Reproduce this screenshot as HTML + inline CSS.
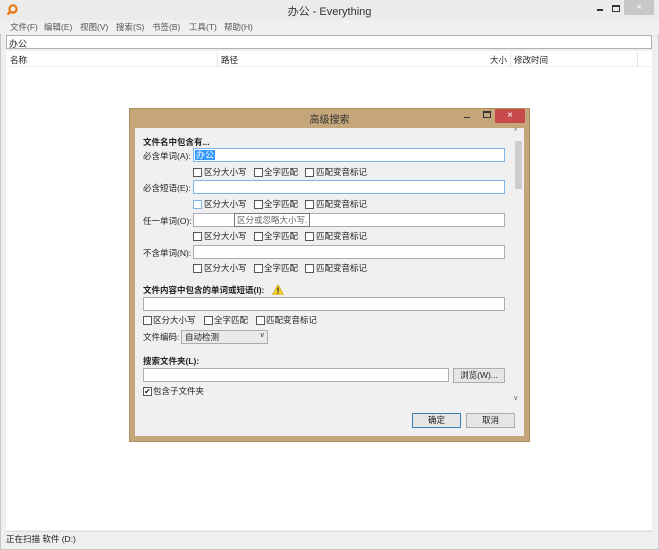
<!DOCTYPE html><html><head><meta charset="utf-8"><style>
*{margin:0;padding:0;box-sizing:border-box}
body{width:659px;height:550px;background:#e8e8e8;font-family:"Liberation Sans","Noto Sans CJK SC",sans-serif;font-size:8.5px;color:#222;position:relative;overflow:hidden}
.a{position:absolute;white-space:nowrap}
.in{position:absolute;background:#fff;border:1px solid #abadb3}
.cb{position:absolute;width:9px;height:9px;border:1px solid #555;background:#fff}
.m{position:absolute;top:21px;color:#555;font-size:8.5px}
</style></head><body>
<div class="a" style="left:0;top:0;width:659px;height:550px;border:1px solid #c8c8c8;background:#efefef"></div>
<div class="a" style="left:0;top:0;width:659px;height:20px;background:#ebebeb"></div>
<svg class="a" style="left:6px;top:4px" width="12" height="12"><circle cx="7" cy="5" r="3.6" fill="none" stroke="#e87b14" stroke-width="2.2"/><line x1="4.5" y1="7.5" x2="1.5" y2="10.5" stroke="#e87b14" stroke-width="2.4"/></svg>
<div class="a" style="left:0;width:659px;top:3px;text-align:center;font-size:11px;color:#333">办公 - Everything</div>
<div class="a" style="left:597px;top:3px;width:6px;height:8px;border-bottom:2px solid #333"></div>
<div class="a" style="left:612px;top:5px;width:8px;height:7px;border:1px solid #333;border-top-width:2px"></div>
<div class="a" style="left:624px;top:0;width:30px;height:15px;background:#c7c7c7;color:#fff;text-align:center;font-size:10px;line-height:15px">×</div>
<div class="a" style="left:0;top:20px;width:659px;height:14px;background:#f0f0f0"></div>
<div class="m" style="left:10px">文件(F)</div>
<div class="m" style="left:44px">编辑(E)</div>
<div class="m" style="left:80px">视图(V)</div>
<div class="m" style="left:116px">搜索(S)</div>
<div class="m" style="left:152px">书签(B)</div>
<div class="m" style="left:189px">工具(T)</div>
<div class="m" style="left:224px">帮助(H)</div>
<div class="in" style="left:6px;top:35px;width:646px;height:14px;border-color:#b0b0b0"></div>
<div class="a" style="left:9px;top:37px;font-size:9px">办公</div>
<div class="a" style="left:6px;top:51px;width:646px;height:479px;background:#fff"></div>
<div class="a" style="left:6px;top:52px;width:646px;height:15px;border-bottom:1px solid #eee"></div>
<div class="a" style="left:10px;top:54px">名称</div>
<div class="a" style="left:217px;top:52px;height:15px;border-left:1px solid #e5e5e5"></div>
<div class="a" style="left:221px;top:54px">路径</div>
<div class="a" style="left:490px;top:54px">大小</div>
<div class="a" style="left:510px;top:52px;height:15px;border-left:1px solid #e5e5e5"></div>
<div class="a" style="left:514px;top:54px">修改时间</div>
<div class="a" style="left:637px;top:52px;height:15px;border-left:1px solid #e5e5e5"></div>
<div class="a" style="left:6px;top:531px;width:646px;height:14px;background:#efefef;border-top:1px solid #ddd"></div>
<div class="a" style="left:6px;top:533px">正在扫描 软件 (D:)</div>

<div class="a" style="left:129px;top:108px;width:401px;height:334px;background:#c4a67a;border:1px solid #b09060"></div>
<div class="a" style="left:129px;top:111px;width:401px;text-align:center;font-size:10px;color:#333">高级搜索</div>
<div class="a" style="left:464px;top:114px;width:6px;border-bottom:1.5px solid #333;height:4px"></div>
<div class="a" style="left:483px;top:111px;width:8px;height:7px;border:1px solid #333;border-top-width:2px"></div>
<div class="a" style="left:495px;top:109px;width:30px;height:14px;background:#c74b4b;color:#fff;text-align:center;font-size:10px;line-height:14px">×</div>
<div class="a" style="left:135px;top:128px;width:389px;height:308px;background:#f0f0f0"></div>
<div class="a" style="left:512px;top:128px;width:11px;height:280px;background:#f0f0f0"></div>
<div class="a" style="left:515px;top:141px;width:7px;height:48px;background:#cdcdcd"></div>
<div class="a" style="left:514px;top:128px;font-size:7px;color:#555">^</div>
<div class="a" style="left:514px;top:395px;font-size:7px;color:#555">v</div>

<div class="a" style="left:143px;top:136px;font-weight:bold">文件名中包含有...</div>
<div class="a" style="left:143px;top:150px">必含单词(A):</div>
<div class="in" style="left:193px;top:148px;width:312px;height:14px;border-color:#7eb4ea"></div>
<div class="a" style="left:195px;top:150px;background:#3399ff;color:#fff;font-size:9px;padding:0 1px;line-height:10px">办公</div>
<div class="a" style="left:143px;top:182px">必含短语(E):</div>
<div class="in" style="left:193px;top:180px;width:312px;height:14px;border-color:#7eb4ea"></div>
<div class="a" style="left:143px;top:215px">任一单词(O):</div>
<div class="in" style="left:193px;top:213px;width:312px;height:14px"></div>
<div class="a" style="left:234px;top:213px;border:1px solid #767676;background:#fff;color:#666;padding:0 2px">区分或忽略大小写.</div>
<div class="a" style="left:143px;top:247px">不含单词(N):</div>
<div class="in" style="left:193px;top:245px;width:312px;height:14px"></div>

<div class="cb" style="left:193px;top:168px"></div><div class="a" style="left:204px;top:166px">区分大小写</div>
<div class="cb" style="left:254px;top:168px"></div><div class="a" style="left:264px;top:166px">全字匹配</div>
<div class="cb" style="left:305px;top:168px"></div><div class="a" style="left:316px;top:166px">匹配变音标记</div>
<div class="cb" style="left:193px;top:200px;border-color:#7eb4ea"></div><div class="a" style="left:204px;top:198px">区分大小写</div>
<div class="cb" style="left:254px;top:200px"></div><div class="a" style="left:264px;top:198px">全字匹配</div>
<div class="cb" style="left:305px;top:200px"></div><div class="a" style="left:316px;top:198px">匹配变音标记</div>
<div class="cb" style="left:193px;top:232px"></div><div class="a" style="left:204px;top:230px">区分大小写</div>
<div class="cb" style="left:254px;top:232px"></div><div class="a" style="left:264px;top:230px">全字匹配</div>
<div class="cb" style="left:305px;top:232px"></div><div class="a" style="left:316px;top:230px">匹配变音标记</div>
<div class="cb" style="left:193px;top:264px"></div><div class="a" style="left:204px;top:262px">区分大小写</div>
<div class="cb" style="left:254px;top:264px"></div><div class="a" style="left:264px;top:262px">全字匹配</div>
<div class="cb" style="left:305px;top:264px"></div><div class="a" style="left:316px;top:262px">匹配变音标记</div>

<div class="a" style="left:143px;top:284px;font-weight:bold">文件内容中包含的单词或短语(I):</div>
<svg class="a" style="left:272px;top:284px" width="12" height="11"><path d="M6 0.5L11.5 10.5H0.5Z" fill="#f2d230" stroke="#c9a400" stroke-width="0.6"/><rect x="5.4" y="3.5" width="1.2" height="4" fill="#222"/><rect x="5.4" y="8.3" width="1.2" height="1.2" fill="#222"/></svg>
<div class="in" style="left:143px;top:297px;width:362px;height:14px"></div>
<div class="cb" style="left:143px;top:316px"></div><div class="a" style="left:153px;top:314px">区分大小写</div>
<div class="cb" style="left:204px;top:316px"></div><div class="a" style="left:214px;top:314px">全字匹配</div>
<div class="cb" style="left:256px;top:316px"></div><div class="a" style="left:266px;top:314px">匹配变音标记</div>
<div class="a" style="left:143px;top:331px">文件编码:</div>
<div class="a" style="left:181px;top:330px;width:87px;height:14px;border:1px solid #acacac;background:#e9e9e9;padding:0 3px">自动检测<span style="position:absolute;right:3px;top:1px;font-size:7px">v</span></div>
<div class="a" style="left:143px;top:355px;font-weight:bold">搜索文件夹(L):</div>
<div class="in" style="left:143px;top:368px;width:306px;height:14px"></div>
<div class="a" style="left:453px;top:368px;width:52px;height:15px;border:1px solid #acacac;background:#e5e5e5;text-align:center;line-height:13px">浏览(W)...</div>
<div class="cb" style="left:143px;top:387px;font-size:8px;line-height:7px;text-align:center">✔</div><div class="a" style="left:153px;top:385px">包含子文件夹</div>
<div class="a" style="left:412px;top:413px;width:49px;height:15px;border:1px solid #3c7fb1;background:#e5e5e5;text-align:center;line-height:13px">确定</div>
<div class="a" style="left:466px;top:413px;width:49px;height:15px;border:1px solid #acacac;background:#e5e5e5;text-align:center;line-height:13px">取消</div>
</body></html>
